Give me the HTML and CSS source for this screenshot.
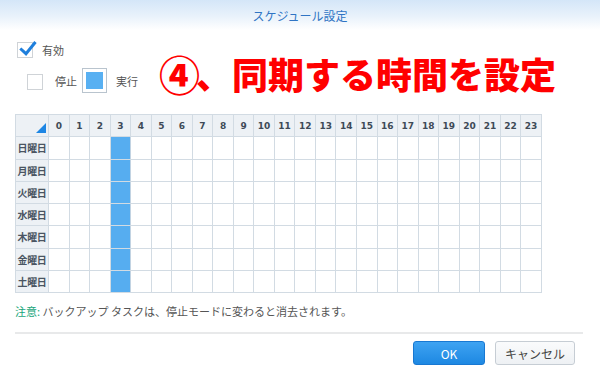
FILE: index.html
```html
<!DOCTYPE html>
<html lang="ja">
<head>
<meta charset="utf-8">
<link rel="stylesheet" href="styles.css">
</head>
<body>
<div class="dialog">
  <header class="titlebar">スケジュール設定</header>
  <div class="content">
    <div class="opt enable">
      <span class="cb"><svg class="check" width="20" height="18" viewBox="0 0 20 18"><path d="M2.3 8.5 L8 13.7 L17.5 2" fill="none" stroke="#1f7fdc" stroke-width="3" stroke-linejoin="miter" stroke-linecap="butt"/></svg></span>
      <span class="lbl">有効</span>
    </div>
    <div class="opt legend">
      <span class="cb"></span>
      <span class="lbl">停止</span>
      <span class="swatch"><span class="fill"></span></span>
      <span class="lbl">実行</span>
    </div>
    <div class="annot"><span class="num">④</span>、同期する時間を設定</div>
    <table class="sched">
      <colgroup><col class="c-day"><col span="24"></colgroup>
      <thead>
        <tr><th class="corner"><span class="tri"></span></th><th>0</th><th>1</th><th>2</th><th>3</th><th>4</th><th>5</th><th>6</th><th>7</th><th>8</th><th>9</th><th>10</th><th>11</th><th>12</th><th>13</th><th>14</th><th>15</th><th>16</th><th>17</th><th>18</th><th>19</th><th>20</th><th>21</th><th>22</th><th>23</th></tr>
      </thead>
      <tbody>
        <tr><th>日曜日</th><td></td><td></td><td></td><td class="on"></td><td></td><td></td><td></td><td></td><td></td><td></td><td></td><td></td><td></td><td></td><td></td><td></td><td></td><td></td><td></td><td></td><td></td><td></td><td></td><td></td></tr>
        <tr><th>月曜日</th><td></td><td></td><td></td><td class="on"></td><td></td><td></td><td></td><td></td><td></td><td></td><td></td><td></td><td></td><td></td><td></td><td></td><td></td><td></td><td></td><td></td><td></td><td></td><td></td><td></td></tr>
        <tr><th>火曜日</th><td></td><td></td><td></td><td class="on"></td><td></td><td></td><td></td><td></td><td></td><td></td><td></td><td></td><td></td><td></td><td></td><td></td><td></td><td></td><td></td><td></td><td></td><td></td><td></td><td></td></tr>
        <tr><th>水曜日</th><td></td><td></td><td></td><td class="on"></td><td></td><td></td><td></td><td></td><td></td><td></td><td></td><td></td><td></td><td></td><td></td><td></td><td></td><td></td><td></td><td></td><td></td><td></td><td></td><td></td></tr>
        <tr><th>木曜日</th><td></td><td></td><td></td><td class="on"></td><td></td><td></td><td></td><td></td><td></td><td></td><td></td><td></td><td></td><td></td><td></td><td></td><td></td><td></td><td></td><td></td><td></td><td></td><td></td><td></td></tr>
        <tr><th>金曜日</th><td></td><td></td><td></td><td class="on"></td><td></td><td></td><td></td><td></td><td></td><td></td><td></td><td></td><td></td><td></td><td></td><td></td><td></td><td></td><td></td><td></td><td></td><td></td><td></td><td></td></tr>
        <tr><th>土曜日</th><td></td><td></td><td></td><td class="on"></td><td></td><td></td><td></td><td></td><td></td><td></td><td></td><td></td><td></td><td></td><td></td><td></td><td></td><td></td><td></td><td></td><td></td><td></td><td></td><td></td></tr>
      </tbody>
    </table>
    <p class="note"><span class="hl">注意:</span> バックアップ タスクは、停止モードに変わると消去されます。</p>
  </div>
  <div class="sep"></div>
  <div class="actions">
    <button class="btn primary">OK</button>
    <button class="btn">キャンセル</button>
  </div>
</div>
</body>
</html>
```
FILE: styles.css
```css
html, body {
  margin: 0;
  padding: 0;
  background: #fff;
}
body {
  width: 600px;
  height: 371px;
  overflow: hidden;
  font-family: "Noto Sans CJK JP", "Noto Sans", sans-serif;
  color: #555;
}
.dialog {
  position: relative;
  width: 600px;
  height: 371px;
}
.titlebar {
  height: 30px;
  line-height: 32px;
  text-align: center;
  font-size: 12px;
  color: #2f74c4;
  background: linear-gradient(to bottom, #d4e6f8 0%, #e9f2fb 55%, #ffffff 100%);
}
.content {
  padding: 0 15px;
}
.opt {
  display: flex;
  align-items: center;
  font-size: 11px;
  color: #555;
}
.enable {
  margin-top: 12px;
  margin-left: 2px;
  height: 16px;
}
.cb {
  position: relative;
  box-sizing: border-box;
  width: 16px;
  height: 16px;
  border: 1px solid #cfd3d7;
  background: #fff;
  flex: none;
}
.check {
  position: absolute;
  left: 0;
  top: -3px;
}
.enable .lbl {
  margin-left: 9px;
}
.legend {
  margin-top: 10px;
  margin-left: 12px;
  height: 25px;
}
.legend .cb {
  margin-top: 3px;
}
.legend .lbl:nth-of-type(2) {
  margin-left: 12px;
  margin-right: 5px;
}
.swatch {
  box-sizing: border-box;
  width: 25px;
  height: 25px;
  border: 1px solid #b9c4ce;
  padding: 3px;
  background: #fff;
  flex: none;
}
.swatch .fill {
  display: block;
  width: 17px;
  height: 17px;
  background: #58b0f2;
}
.swatch + .lbl {
  margin-left: 9px;
}
.annot {
  position: absolute;
  left: 159px;
  top: 55px;
  font-size: 36px;
  line-height: 36px;
  font-weight: 900;
  color: #ff0000;
  white-space: nowrap;
  letter-spacing: 0;
}
.annot .num {
  font-size: 41px;
  line-height: 0;
  vertical-align: -2px;
  margin-right: -4px;
}
.sched {
  margin-top: 21px;
  width: 527px;
  table-layout: fixed;
  border-collapse: collapse;
}
.sched col.c-day {
  width: 33px;
}
.sched tr {
  height: 22.25px;
}
.sched th, .sched td {
  border: 1px solid #d2dbe3;
  padding: 0;
}
.sched th {
  background: #edf1f5;
  font-family: "DejaVu Sans", sans-serif;
  font-weight: bold;
  font-size: 9px;
  color: #3e4a57;
  text-align: center;
}
.sched tbody th {
  font-family: "Noto Sans CJK JP", sans-serif;
  font-size: 10px;
  color: #4a5562;
  letter-spacing: -0.3px;
}
.sched td {
  background: #fff;
}
.sched td.on {
  background: #56adf0;
  border-left-color: #c2d3e2;
  border-right-color: #c2d3e2;
}
.sched th.corner {
  position: relative;
}
.tri {
  position: absolute;
  right: 2px;
  bottom: 3px;
  width: 0;
  height: 0;
  border-style: solid;
  border-width: 0 0 10px 10px;
  border-color: transparent transparent #1d86e4 transparent;
}
.note {
  margin: 10px 0 0;
  font-size: 11px;
  line-height: 16px;
  color: #555;
}
.note .hl {
  color: #1aa67b;
}
.sep {
  margin: 13px 17px 0 15px;
  height: 2px;
  background: #e8e9ea;
}
.actions {
  display: flex;
  justify-content: flex-end;
  gap: 10px;
  margin-top: 7px;
  padding-right: 25px;
}
.btn {
  box-sizing: border-box;
  height: 24px;
  width: 80px;
  border-radius: 3px;
  border: 1px solid #c6cdd4;
  background: linear-gradient(to bottom, #fafbfc, #eef1f4);
  font-family: "Noto Sans CJK JP", sans-serif;
  font-size: 12px;
  color: #444;
  padding: 0;
}
.btn.primary {
  width: 72px;
  border-color: #1878d2;
  background: linear-gradient(to bottom, #3ea3f2, #1d88e2);
  color: #fff;
}
```
